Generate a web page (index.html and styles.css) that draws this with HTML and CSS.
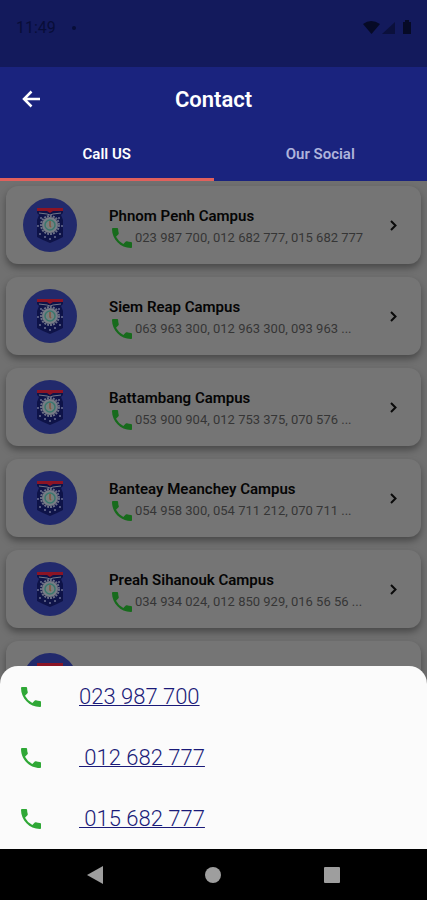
FILE: index.html
```html
<!DOCTYPE html>
<html lang="en">
<head>
  <meta charset="UTF-8">
  <title>Contact</title>
  <meta name="viewport" content="width=device-width, initial-scale=1.0">
  <link rel="stylesheet" href="styles.css">
</head>
<body>

  <!-- shared icons -->
  <svg class="sprite" aria-hidden="true">
    <symbol id="phone" viewBox="3 3 18 18">
      <path d="M20 15.5c-1.25 0-2.45-.2-3.57-.57a1 1 0 0 0-1.02.24l-2.2 2.2a15.05 15.05 0 0 1-6.59-6.58l2.2-2.21a.96.96 0 0 0 .25-1A11.36 11.36 0 0 1 8.5 4c0-.55-.45-1-1-1H4c-.55 0-1 .45-1 1 0 9.39 7.61 17 17 17 .55 0 1-.45 1-1v-3.500c0-.55-.45-1-1-1z"/>
    </symbol>
    <symbol id="chevron" viewBox="0 0 7 11">
      <path d="M1 1l4.500 4.500L1 10" fill="none" stroke="#0a0a0a" stroke-width="2"/>
    </symbol>
    <symbol id="crest" viewBox="0 0 54 54">
      <circle cx="27" cy="27" r="27" fill="#222a6c"/>
      <path d="M14 12h26v3l-2 2 2 5v17l-6 3-7 3-7-3-6-3V22l2-5-2-2z" fill="#0e1348"/>
      <path d="M14 10h26v3H30l-3 2-3-2H14z" fill="#8b1425"/>
      <path d="M16 15l8 1 3 1 3-1 8-1" fill="none" stroke="#727787" stroke-width="1"/>
      <g fill="#6a6f90">
        <circle cx="18" cy="20" r="1"/><circle cx="36" cy="20" r="1"/>
        <circle cx="15" cy="28" r="1"/><circle cx="39" cy="28" r="1"/>
        <circle cx="17" cy="36" r="1"/><circle cx="37" cy="36" r="1"/>
        <circle cx="22" cy="39" r="1"/><circle cx="32" cy="39" r="1"/>
        <circle cx="27" cy="41" r="1"/>
      </g>
      <circle cx="27" cy="27" r="9" fill="none" stroke="#6b7085" stroke-width="2" stroke-dasharray="2 1"/>
      <circle cx="27" cy="27" r="8" fill="#777c85"/>
      <circle cx="27" cy="27" r="5" fill="#777f7d" stroke="#3a776d" stroke-width="1.500"/>
      <path d="M27 23v5l1 1" fill="none" stroke="#86563f" stroke-width="1.500"/>
    </symbol>
  </svg>

  <div class="screen">
    <div class="status-bar">
      <span class="time">11:49</span>
      <span class="dot"></span>
      <svg class="status-icons" viewBox="0 0 50 16" aria-hidden="true">
        <path d="M0 4q8-6 17 0L8.500 14z"/>
        <path class="signal" d="M19 14L32 2v12z"/>
        <path d="M40 2h2V0h4v2h2v12h-8z"/>
      </svg>
    </div>

    <header class="header">
      <div class="app-bar">
        <button class="back" aria-label="Back">
          <svg viewBox="0 0 18 18" aria-hidden="true"><path d="M18 9H2M9.500 1.500L2 9l7.500 7.500"/></svg>
        </button>
        <h1 class="title">Contact</h1>
      </div>
      <nav class="tabs">
        <button class="tab active">Call US</button>
        <button class="tab">Our Social</button>
      </nav>
    </header>

    <main class="list">
      <button class="card">
        <svg class="crest"><use href="#crest"/></svg>
        <span class="info">
          <span class="campus">Phnom Penh Campus</span>
          <span class="numbers"><svg class="phone"><use href="#phone"/></svg>023 987 700, 012 682 777, 015 682 777</span>
        </span>
        <svg class="chevron"><use href="#chevron"/></svg>
      </button>
      <button class="card">
        <svg class="crest"><use href="#crest"/></svg>
        <span class="info">
          <span class="campus">Siem Reap Campus</span>
          <span class="numbers"><svg class="phone"><use href="#phone"/></svg>063 963 300, 012 963 300, 093 963 ...</span>
        </span>
        <svg class="chevron"><use href="#chevron"/></svg>
      </button>
      <button class="card">
        <svg class="crest"><use href="#crest"/></svg>
        <span class="info">
          <span class="campus">Battambang Campus</span>
          <span class="numbers"><svg class="phone"><use href="#phone"/></svg>053 900 904, 012 753 375, 070 576 ...</span>
        </span>
        <svg class="chevron"><use href="#chevron"/></svg>
      </button>
      <button class="card">
        <svg class="crest"><use href="#crest"/></svg>
        <span class="info">
          <span class="campus">Banteay Meanchey Campus</span>
          <span class="numbers"><svg class="phone"><use href="#phone"/></svg>054 958 300, 054 711 212, 070 711 ...</span>
        </span>
        <svg class="chevron"><use href="#chevron"/></svg>
      </button>
      <button class="card">
        <svg class="crest"><use href="#crest"/></svg>
        <span class="info">
          <span class="campus">Preah Sihanouk Campus</span>
          <span class="numbers"><svg class="phone"><use href="#phone"/></svg>034 934 024, 012 850 929, 016 56 56 ...</span>
        </span>
        <svg class="chevron"><use href="#chevron"/></svg>
      </button>
      <button class="card" aria-label="More campuses">
        <svg class="crest"><use href="#crest"/></svg>
      </button>
    </main>

    <div class="bottom">
      <div class="sheet">
        <div class="sheet-row">
          <svg class="call-icon"><use href="#phone"/></svg>
          <a href="tel:023987700">023 987 700</a>
        </div>
        <div class="sheet-row">
          <svg class="call-icon"><use href="#phone"/></svg>
          <a href="tel:012682777">&nbsp;012 682 777</a>
        </div>
        <div class="sheet-row">
          <svg class="call-icon"><use href="#phone"/></svg>
          <a href="tel:015682777">&nbsp;015 682 777</a>
        </div>
      </div>
      <div class="system-nav">
        <button aria-label="Back"><svg viewBox="0 0 18 18"><path d="M17 0v18L1 9z"/></svg></button>
        <button aria-label="Home"><svg viewBox="0 0 18 18"><circle cx="9" cy="9" r="8"/></svg></button>
        <button aria-label="Recent apps"><svg viewBox="0 0 18 18"><rect x="1" y="1" width="16" height="16" rx="1"/></svg></button>
      </div>
    </div>
  </div>

</body>
</html>
```
FILE: styles.css
```css
* {
  box-sizing: border-box;
}
body {
  margin: 0;
  font-family: Roboto, sans-serif;
  background: #707070;
}
button {
  padding: 0;
  border: none;
  background: none;
  font-family: inherit;
  cursor: pointer;
}
svg {
  display: block;
  flex: none;
}
.sprite {
  position: absolute;
  width: 0;
  height: 0;
}
.screen {
  position: relative;
  height: 100vh;
  display: flex;
  flex-direction: column;
  overflow: hidden;
}

/* status bar */
.status-bar {
  flex: none;
  display: flex;
  align-items: center;
  height: 67px;
  padding: 0 14px 12px 16px;
  background: #131a5c;
  color: #080d38;
}
.time {
  font-size: 16px;
}
.dot {
  width: 4px;
  height: 4px;
  margin-left: 16px;
  border-radius: 50%;
  background: #080d38;
}
.status-icons {
  width: 50px;
  height: 16px;
  margin-left: auto;
  fill: #060a26;
}
.signal {
  opacity: 0.6;
}

/* header */
.header {
  flex: none;
  background: #1a237e;
}
.app-bar {
  display: grid;
  grid-template-columns: 62px 1fr 62px;
  align-items: center;
  height: 64px;
}
.back svg {
  width: 18px;
  height: 18px;
  margin: 0 auto;
  fill: none;
  stroke: #fff;
  stroke-width: 2.5;
}
.title {
  margin: 0;
  font-size: 22px;
  font-weight: 600;
  text-align: center;
  color: #fff;
}
.tabs {
  display: flex;
}
.tab {
  flex: 1;
  height: 50px;
  padding-bottom: 2px;
  border-bottom: 3px solid transparent;
  font-size: 15px;
  font-weight: 600;
  color: #aeb3dc;
}
.tab.active {
  border-bottom-color: #e0605c;
  color: #fff;
}

/* campus list */
.list {
  display: flex;
  flex-direction: column;
  gap: 13px;
  padding: 5px 6px;
}
.card {
  flex: none;
  display: flex;
  align-items: center;
  height: 78px;
  padding: 0 24px 0 17px;
  border-radius: 12px;
  background: #757575;
  box-shadow: 0 4px 7px rgba(0, 0, 0, 0.35);
  text-align: left;
}
.crest {
  width: 54px;
  height: 54px;
}
.info {
  flex: 1;
  padding-top: 5px;
  padding-left: 32px;
}
.campus {
  display: block;
  font-size: 15px;
  font-weight: 600;
  line-height: 20px;
  color: #050505;
}
.numbers {
  display: flex;
  align-items: center;
  gap: 3px;
  padding-left: 3px;
  font-size: 13px;
  line-height: 24px;
  white-space: nowrap;
  color: #353535;
}
.phone {
  width: 20px;
  height: 20px;
  fill: #176b1c;
}
.chevron {
  width: 7px;
  height: 11px;
}

/* call sheet over the list */
.bottom {
  position: absolute;
  left: 0;
  right: 0;
  bottom: 0;
}
.sheet {
  border-radius: 18px 18px 0 0;
  background: #fbfbfb;
}
.sheet-row {
  display: flex;
  align-items: center;
  gap: 38px;
  height: 61px;
  padding-left: 21px;
}
.sheet-row a {
  font-size: 22px;
  font-weight: 300;
  color: #1a1a78;
  text-decoration-thickness: 1px;
}
.call-icon {
  width: 20px;
  height: 20px;
  fill: #2fa836;
}
.system-nav {
  display: flex;
  justify-content: space-around;
  align-items: center;
  height: 51px;
  padding: 0 36px;
  background: #000;
}
.system-nav svg {
  width: 18px;
  height: 18px;
  fill: #9e9e9e;
}
```
